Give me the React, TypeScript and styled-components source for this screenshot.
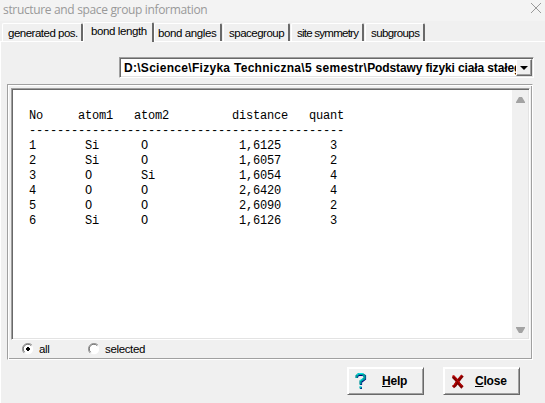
import React from 'react';
import styled, { createGlobalStyle } from 'styled-components';

const Global = createGlobalStyle`
  * { box-sizing: border-box; }
  body { margin: 0; background: #f0f0f0; overflow: hidden; }
`;
const Window = styled.main`
  width: 545px; height: 403px; background: #f0f0f0; color: #000;
  display: flex; flex-direction: column; overflow: hidden;
  font: 11.5px/14px "Liberation Sans", Arial, sans-serif;
`;
const TitleBar = styled.header`
  height: 21px; flex: none; background: #f3f3f3; color: #999;
  display: flex; justify-content: space-between; padding: 0 3px;
  font: 12px/19px "Open Sans", "Noto Sans", sans-serif;
`;
const Title = styled.span`
  letter-spacing: -0.34px; white-space: nowrap;
`;
const CloseIcon = styled.svg`margin-top: 2px; width: 12px; height: 12px;`;
const Tabs = styled.nav`
  height: 20px; flex: none; display: flex; align-items: flex-end; padding-left: 2px;
`;
const Tab = styled.button<{ $width: number; $active?: boolean; $spacing: number; $gap?: number; $inset?: number }>`
  width: ${p => p.$width}px; flex: none;
  height: ${p => (p.$active ? 20 : 18)}px;
  margin: 0 0 ${p => (p.$active ? -1 : 0)}px ${p => p.$gap ?? 0}px;
  padding: ${p => (p.$active ? 1 : 2)}px 0 0 ${p => p.$inset ?? 5}px;
  border: 0; border-top: 1px solid #fff; border-left: 1px solid #fff;
  border-right: 2px solid #696969; border-radius: 2px 2px 0 0;
  background: #f0f0f0; color: #000; text-align: left; white-space: nowrap;
  font: inherit; line-height: 14px; letter-spacing: ${p => p.$spacing}px;
  display: flex; align-items: flex-start;
  ${p => p.$active && 'position: relative; z-index: 1;'}
`;
const Page = styled.section`
  flex: 1; border-top: 1px solid #fff; border-left: 1px solid #fff;
  padding: 15px 0 0 6px; display: flex; flex-direction: column;
`;
const Combo = styled.div`
  margin-left: 112px; width: 415px; height: 21px; flex: none; display: flex; background: #fff;
  border: 1px solid; border-color: #a0a0a0 #fff #fff #a0a0a0;
  box-shadow: inset 1px 1px #696969, inset -1px -1px #e3e3e3;
  padding: 1px;
`;
const Path = styled.span`
  flex: 1; min-width: 0; overflow: hidden; white-space: nowrap; padding-left: 3px;
  font-size: 12px; font-weight: bold; line-height: 18px; letter-spacing: 0.29px;
`;
const Folder = styled.span`letter-spacing: -0.12px;`;
const Drop = styled.button`
  width: 16px; height: 17px; border: 1px solid; border-color: #fff #696969 #696969 #fff;
  background: #f0f0f0; padding: 0; display: flex; align-items: center; justify-content: center;
  box-shadow: inset -1px -1px #a0a0a0;
`;
const Panel = styled.div`
  margin-top: 6px; width: 526px; height: 276px; flex: none; padding: 3px;
  border: 1px solid; border-color: #a0a0a0 #fff #fff #a0a0a0;
  box-shadow: inset 1px 1px #fff, inset -1px -1px #a0a0a0;
`;
const Memo = styled.div`
  width: 519px; height: 252px; background: #fff; display: flex;
  border: 1px solid; border-color: #a0a0a0 #fff #fff #a0a0a0;
  box-shadow: inset 1px 1px #696969, inset -1px -1px #e3e3e3; padding: 1px;
`;
const Listing = styled.pre`
  flex: 1; margin: 0; padding: 4px 0 0 16px; font: 12px/15px "Liberation Mono", monospace;
  letter-spacing: -0.2px;
`;
const Scroll = styled.div`
  width: 16px; background: #f0f0f0; display: flex; flex-direction: column;
  justify-content: space-between; align-items: center; padding: 7px 0 5px;
`;
const Options = styled.div`display: flex; padding: 2px 0 0 11px; height: 18px;`;
const Option = styled.label<{ $width: number }>`
  display: flex; gap: 5px; width: ${p => p.$width}px; letter-spacing: -0.35px;
  svg { margin-top: 1px; }
`;
const Footer = styled.footer`display: flex; gap: 19px; margin: 7px 0 0 340px;`;
const Action = styled.button<{ $gap: number }>`
  width: 77px; height: 28px; padding: 0 0 0 7px; background: #f0f0f0; color: #000;
  border: 1px solid; border-color: #fff #696969 #696969 #fff;
  box-shadow: inset 1px 1px #fff, inset -1px -1px #a0a0a0;
  display: flex; align-items: center; gap: ${p => p.$gap}px;
  font: bold 12px/14px "Liberation Sans", Arial, sans-serif; letter-spacing: -0.2px;
  u { text-underline-offset: 1px; text-decoration-thickness: 1px; }
`;

const tabs = [
  { name: 'generated pos.', width: 81, spacing: -0.5 },
  { name: 'bond length', width: 71, spacing: -0.4, active: true, inset: 7 },
  { name: 'bond angles', width: 68, spacing: -0.4, inset: 3 },
  { name: 'spacegroup', width: 67, spacing: -0.5, gap: 1 },
  { name: 'site symmetry', width: 73, spacing: -0.75, gap: 1 },
  { name: 'subgroups', width: 60, spacing: -0.6, gap: 1 },
];

const atoms = [
  ['1', 'Si', 'O', '1,6125', '3'],
  ['2', 'Si', 'O', '1,6057', '2'],
  ['3', 'O', 'Si', '1,6054', '4'],
  ['4', 'O', 'O', '2,6420', '4'],
  ['5', 'O', 'O', '2,6090', '2'],
  ['6', 'Si', 'O', '1,6126', '3'],
];
const listing = [
  '',
  'No'.padEnd(7) + 'atom1'.padEnd(8) + 'atom2'.padEnd(14) + 'distance'.padEnd(11) + 'quant',
  '-'.repeat(45),
  ...atoms.map(([n, a, b, d, q]) => n.padEnd(8) + a.padEnd(8) + b.padEnd(14) + d.padEnd(13) + q),
].join('\n');

const Radio = ({ checked = false }) => (
  <svg width="12" height="12" viewBox="0 0 12 12">
    <circle cx="6" cy="6" r="5.2" fill="#fff" />
    <path d="M2 10A5.5 5.5 0 0 1 10 2" fill="none" stroke="#a0a0a0" />
    <path d="M2.6 9.2A4.5 4.5 0 0 1 9.2 2.6" fill="none" stroke="#696969" />
    {checked && <path d="M5 4h2v1h1v2H7v1H5V7H4V5h1z" fill="#000" shapeRendering="crispEdges" />}
  </svg>
);
const Question = () => (
  <svg width="12" height="18" viewBox="0 0 12 18" fill="none">
    <path d="M2 6V4L4 3h4l2 1v3L6 10v3M5 16h2" stroke="#000080" strokeWidth="2.2" />
    <path d="M1.5 6V4L3.5 2h4l2 1.5v3L5.500 9v3.500M4.500 15.500h2" stroke="#009c9c" strokeWidth="2.2" />
    <path d="M2 3l2-1.500h4M5 9l3-2.500M4.500 15h2" stroke="#00e5e5" />
  </svg>
);
const Cross = () => (
  <svg width="14" height="15" viewBox="0 0 14 15" fill="none">
    <path d="M2 2.500l3 3 2 3 2.500 3 2 2M11.500 1.500l-2.500 3-3 4-2 3-2 1.500" stroke="#800000" strokeWidth="3.200" />
    <path d="M1 2.500l1.500-1L5 4l2 3 2.500 3.500 2 1.500M11 1L8 4.500M5.500 7.500l-2 3.500-2 1.500" stroke="#d00000" strokeWidth="1" />
  </svg>
);

export default function App() {
  return (
    <>
      <Global />
      <Window>
        <TitleBar>
          <Title>structure and space group information</Title>
          <CloseIcon viewBox="0 0 12 12"><path d="M1 1l10 10M11 1L1 11" stroke="#999" fill="none" /></CloseIcon>
        </TitleBar>
        <Tabs>
          {tabs.map(t => (
            <Tab key={t.name} $width={t.width} $active={t.active} $spacing={t.spacing} $gap={t.gap} $inset={t.inset}>{t.name}</Tab>
          ))}
        </Tabs>
        <Page>
          <Combo>
            <Path>D:\Science\Fizyka Techniczna\5 semestr\<Folder>Podstawy fizyki ciała stałego</Folder></Path>
            <Drop><svg width="8" height="4"><path d="M0 0h8L4 4z" /></svg></Drop>
          </Combo>
          <Panel>
            <Memo>
              <Listing>{listing}</Listing>
              <Scroll>
                <svg width="9" height="6"><path d="M0 6V5l3-5h3l3 5v1z" fill="#a3a3a3" /></svg>
                <svg width="9" height="6"><path d="M0 0v1l3 5h3l3-5V0z" fill="#a3a3a3" /></svg>
              </Scroll>
            </Memo>
            <Options>
              <Option $width={66}><Radio checked />all</Option>
              <Option $width={90}><Radio />selected</Option>
            </Options>
          </Panel>
          <Footer>
            <Action $gap={15}><Question /><span><u>H</u>elp</span></Action>
            <Action $gap={10}><Cross /><span><u>C</u>lose</span></Action>
          </Footer>
        </Page>
      </Window>
    </>
  );
}
